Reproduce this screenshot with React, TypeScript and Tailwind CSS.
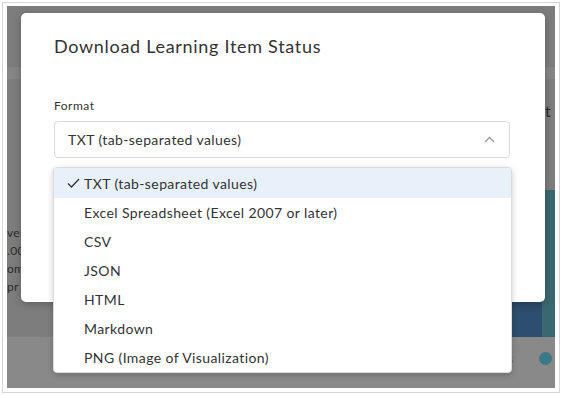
import React from "react";

const items = [
  "TXT (tab-separated values)",
  "Excel Spreadsheet (Excel 2007 or later)",
  "CSV",
  "JSON",
  "HTML",
  "Markdown",
  "PNG (Image of Visualization)",
];

export default function App() {
  return (
    <div
      className="w-[562px] h-[395px] bg-white p-[2px]"
      style={{ fontFamily: "Lato, 'Open Sans', sans-serif" }}
    >
      <div className="w-full h-full border border-[#d6d6d6] bg-white pt-[3px] pl-[4px] pr-[4px] pb-[4px]">
        <div className="relative w-full h-full bg-[#7d7d7d] overflow-hidden">
          {/* background page, dimmed */}
          <div className="w-full h-full flex flex-col">
            <div className="h-[61px] shrink-0" />
            <div className="h-[12px] shrink-0 bg-[#868686]" />
            <div className="flex-1 flex">
              <div className="w-[60px] pt-[145px] text-[12px] leading-[18px] text-[#2c2c2c] tracking-[0.3px]">
                <div>ver</div>
                <div>.00</div>
                <div>om</div>
                <div>pr</div>
              </div>
              <div className="flex-1" />
              <div className="w-[40px] flex flex-col justify-end">
                <div className="h-[67px] bg-[#2d4e6e]" />
              </div>
              <div className="w-[13px] flex flex-col">
                <div className="h-[111px] pt-[22px] pl-[3px] text-[16px] leading-[20px] text-[#2a2a2a]">t</div>
                <div className="flex-1 bg-[#3a6871]" />
              </div>
            </div>
            <div className="h-[51px] shrink-0 bg-[#898989] flex items-center justify-end gap-[26px] pr-[3px] pb-[8px]">
              <span className="text-[12px] text-[#444]">s</span>
              <div className="w-[13px] h-[13px] rounded-full bg-[#3a7a88]" />
            </div>
          </div>

          {/* modal */}
          <div className="absolute left-[14px] top-[7px] w-[524px] h-[289px] bg-white rounded-[5px] shadow-[0_2px_8px_rgba(0,0,0,0.25)] px-[33px] pt-[21px] text-[#333]">
            <div className="text-[18px] leading-[24px] tracking-[0.7px]">
              Download Learning Item Status
            </div>
            <div className="mt-[40px] text-[12px] leading-[16px] tracking-[0.5px]">Format</div>
            <div className="relative mt-[7px]">
              <div className="h-[37px] w-[456px] border border-[#d9d9d9] rounded-[4px] flex items-center justify-between pl-[13px] pr-[14px] text-[14px] tracking-[0.4px]">
                <span>TXT (tab-separated values)</span>
                <svg width="11" height="7" viewBox="0 0 11 7" fill="none">
                  <path d="M1 6L5.5 1.5L10 6" stroke="#9a9a9a" strokeWidth="1.4" />
                </svg>
              </div>
              <div className="absolute left-[-1px] top-[46px] w-[459px] bg-white border border-[#dcdcdc] rounded-[4px] shadow-[0_2px_6px_rgba(0,0,0,0.2)] overflow-hidden flex flex-col">
                {items.map((it, i) => (
                  <div
                    key={it}
                    className={
                      "flex items-center text-[14px] tracking-[0.4px] " +
                      (i === 0 ? "bg-[#e8f1fa] h-[30px]" : "h-[29px]")
                    }
                  >
                    <div className="w-[30px] flex justify-end pr-[4px]">
                      {i === 0 && (
                        <svg width="13" height="10" viewBox="0 0 13 10" fill="none">
                          <path d="M1 5.5L4.5 9L12 1" stroke="#333" strokeWidth="1.3" />
                        </svg>
                      )}
                    </div>
                    <span>{it}</span>
                  </div>
                ))}
              </div>
            </div>
          </div>
        </div>
      </div>
    </div>
  );
}
